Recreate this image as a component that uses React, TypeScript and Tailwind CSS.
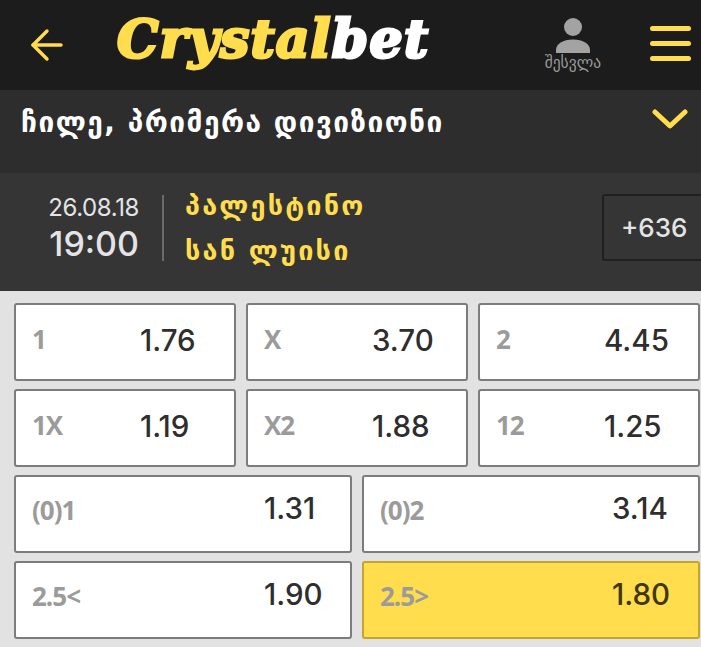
import { ArrowLeft } from "lucide-react";

type Odd = { label: string; value: string; active?: boolean };

const rowsOfThree: Odd[][] = [
  [
    { label: "1", value: "1.76" },
    { label: "X", value: "3.70" },
    { label: "2", value: "4.45" },
  ],
  [
    { label: "1X", value: "1.19" },
    { label: "X2", value: "1.88" },
    { label: "12", value: "1.25" },
  ],
];

const rowsOfTwo: Odd[][] = [
  [
    { label: "(0)1", value: "1.31" },
    { label: "(0)2", value: "3.14" },
  ],
  [
    { label: "2.5<", value: "1.90" },
    { label: "2.5>", value: "1.80", active: true },
  ],
];

const OddButton = ({ odd, wide }: { odd: Odd; wide?: boolean }) => (
  <button
    className={`h-[78px] rounded-[3px] border-2 flex text-left pl-[16px] ${
      odd.active ? "bg-[#ffdd4d] border-[#c4a52f]" : "bg-white border-[#7c7c7c]"
    } ${wide ? "pt-[10px]" : "pt-[14px]"}`}
  >
    <span className={`font-['Open_Sans',sans-serif] font-bold text-[26px] leading-[42px] text-[#9b9b9b] tracking-[-1px] ${wide ? "w-[232px] mt-[2px]" : "w-[108px] mt-[-1px]"}`}>
      {odd.label}
    </span>
    <span className={`font-['Inter',sans-serif] font-medium text-[29.5px] leading-[42px] ${odd.active ? "text-[#3f3505]" : "text-[#2e2e2e]"}`}>
      {odd.value}
    </span>
  </button>
);

const App = () => {
  return (
    <div className="w-[701px] h-[647px] overflow-hidden bg-[#e2e2e2] font-['DejaVu_Sans',sans-serif]">
      <header className="h-[90px] bg-[#1c1c1c] flex items-center">
        <ArrowLeft className="ml-[23px] text-[#ffdd4d]" size={48} strokeWidth={1.7} />
        <div className="ml-[46px] mb-[12px] font-['DejaVu_Serif',serif] font-bold italic text-[52px] leading-none tracking-[1.3px] [-webkit-text-stroke:3px_currentColor] text-[#ffdd4d]">
          Crystal<span className="text-white">bet</span>
        </div>
        <div className="ml-auto mr-[49px] flex flex-col items-center mt-[-2px]">
          <svg width="36" height="36" viewBox="0 0 36 36" className="text-[#a3a3a3]" fill="currentColor">
            <circle cx="18" cy="9" r="9" />
            <path d="M1 35 V32 C1 26 8 21.500 18 21.500 C28 21.500 35 26 35 32 V35 Z" />
          </svg>
          <span className="text-[15.5px] leading-[16px] text-[#9a9a9a] font-normal mt-[1px]">შესვლა</span>
        </div>
        <div className="mr-[10px] mt-[-4px] flex flex-col gap-[10px]">
          <div className="w-[41px] h-[5px] rounded-full bg-[#ffdd4d]" />
          <div className="w-[41px] h-[5px] rounded-full bg-[#ffdd4d]" />
          <div className="w-[41px] h-[5px] rounded-full bg-[#ffdd4d]" />
        </div>
      </header>

      <div className="h-[83px] bg-[#2d2d2d] flex items-start justify-between pl-[21px] pr-[13px] pt-[15px]">
        <span className="text-[28px] leading-[36px] font-bold text-white tracking-[1.5px]">ჩილე, პრიმერა დივიზიონი</span>
        <svg width="36" height="22" viewBox="0 0 36 22" className="mt-[4px] text-[#ffdd4d]" fill="none" stroke="currentColor" strokeWidth="5" strokeLinecap="round" strokeLinejoin="round">
          <path d="M3 3 L18 17 L33 3" />
        </svg>
      </div>

      <div className="h-[118px] bg-[#353535] flex items-center pb-[8px]">
        <div className="w-[139px] flex flex-col items-end text-[#e4e4e4] font-['Inter',sans-serif]">
          <span className="text-[24px] leading-[30px] tracking-[-0.4px]">26.08.18</span>
          <span className="text-[34px] leading-[40px] mt-[1px] font-medium">19:00</span>
        </div>
        <div className="w-[2px] h-[66px] bg-[#6b6b6b] ml-[23px]" />
        <div className="ml-[21px] flex flex-col text-[#ffdd4d] font-bold text-[27px] tracking-[2.2px] leading-[45px]">
          <span>პალესტინო</span>
          <span>სან ლუისი</span>
        </div>
        <div className="ml-auto w-[99px] h-[67px] mt-[-2px] border-2 border-r-0 border-[#202020] rounded-l-[3px] flex items-center pl-[17px] font-['Inter',sans-serif] font-medium text-[26px] text-[#e4e4e4]">
          +636
        </div>
      </div>

      <div className="pt-[12px] pl-[14px] pr-[1px] flex flex-col gap-[8px]">
        {rowsOfThree.map((row, i) => (
          <div key={i} className="grid grid-cols-3 gap-[10px]">
            {row.map((odd) => (
              <OddButton key={odd.label} odd={odd} />
            ))}
          </div>
        ))}
        {rowsOfTwo.map((row, i) => (
          <div key={i} className="grid grid-cols-2 gap-[10px]">
            {row.map((odd) => (
              <OddButton key={odd.label} odd={odd} wide />
            ))}
          </div>
        ))}
      </div>
    </div>
  );
};

export default App;
